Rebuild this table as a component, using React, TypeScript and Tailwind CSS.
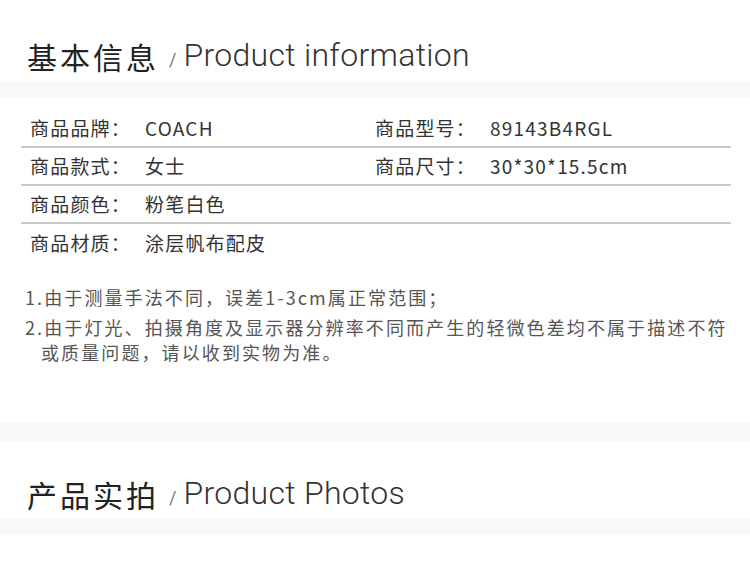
import React from "react";

const cjk = { fontFamily: '"Noto Sans CJK SC", "Noto Sans", sans-serif' };
const latin = { fontFamily: 'Roboto, "Noto Sans CJK SC", sans-serif' };

function Heading({ zh, en }: { zh: string; en: string }) {
  return (
    <div className="flex items-end pl-[27px]">
      <span className="text-[30px] leading-none text-[#222] tracking-[3px]" style={cjk}>
        {zh}
      </span>
      <span className="ml-[10px] text-[18px] leading-none text-[#777] mb-[2px]" style={latin}>
        /
      </span>
      <span className="ml-[7px] text-[32px] leading-none font-light text-[#333] tracking-[0.3px]" style={latin}>
        {en}
      </span>
    </div>
  );
}

const rows: [string, string, string, string][] = [
  ["商品品牌：", "COACH", "商品型号：", "89143B4RGL"],
  ["商品款式：", "女士", "商品尺寸：", "30*30*15.5cm"],
  ["商品颜色：", "粉笔白色", "", ""],
  ["商品材质：", "涂层帆布配皮", "", ""],
];

export default function App() {
  return (
    <div className="w-[750px] h-[587px] bg-white overflow-hidden" style={cjk}>
      <div className="h-[82px] flex items-end pb-[11px]">
        <Heading zh="基本信息" en="Product information" />
      </div>
      <div className="h-[15px] bg-[#f8f8f8]" />
      <div className="mx-[21px] w-[710px] mt-[13px]">
        {rows.map((r, i) => (
          <div
            key={i}
            className={`flex h-[38px] items-center text-[19px] tracking-[1.2px] text-[#333] ${
              i < 3 ? "border-b-2 border-[#c9c9c9]" : ""
            }`}
          >
            <div className="w-[354px] flex pl-[9px]">
              <span className="w-[115px]">{r[0]}</span>
              <span>{r[1]}</span>
            </div>
            <div className="flex">
              <span className="w-[115px]">{r[2]}</span>
              <span>{r[3]}</span>
            </div>
          </div>
        ))}
      </div>
      <div className="mt-[23px] pl-[25px] pr-[12px] text-[18px] tracking-[2.1px] text-[#555] leading-[25px]">
        <p>1.由于测量手法不同，误差1-3cm属正常范围；</p>
        <p className="mt-[5px] pl-[16px] -indent-[16px]">
          2.由于灯光、拍摄角度及显示器分辨率不同而产生的轻微色差均不属于描述不符或质量问题，请以收到实物为准。
        </p>
      </div>
      <div className="mt-[58px] h-[19px] bg-[#f8f8f8]" />
      <div className="h-[76px] flex items-end pb-[9px]">
        <Heading zh="产品实拍" en="Product Photos" />
      </div>
      <div className="h-[17px] bg-[#f8f8f8]" />
    </div>
  );
}
